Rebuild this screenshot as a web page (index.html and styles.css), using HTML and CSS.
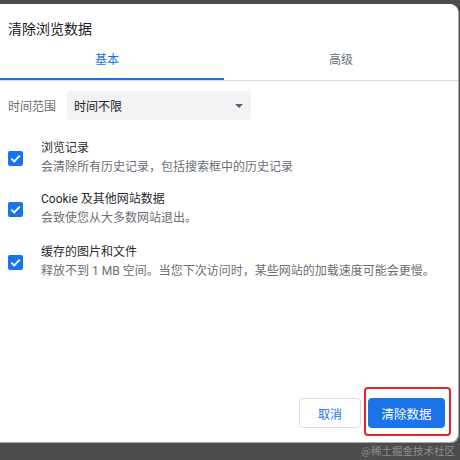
FILE: index.html
```html
<!DOCTYPE html>
<html lang="zh-CN">
<head>
<meta charset="utf-8">
<title>清除浏览数据</title>
<link rel="stylesheet" href="styles.css">
</head>
<body>
<div class="dialog">
  <div class="title">清除浏览数据</div>
  <div class="tabs">
    <div class="tab active">基本</div>
    <div class="tab">高级</div>
  </div>
  <div class="range-row">
    <span class="range-label">时间范围</span>
    <div class="select">
      <span>时间不限</span>
      <span class="caret"></span>
    </div>
  </div>
  <div class="items">
    <div class="item">
      <span class="checkbox"><svg viewBox="0 0 15 15" width="15" height="15"><polyline points="3.3,7.6 6.2,10.4 11.8,4.6" fill="none" stroke="#fff" stroke-width="1.8"/></svg></span>
      <div class="item-text">
        <div class="item-title">浏览记录</div>
        <div class="item-sub">会清除所有历史记录，包括搜索框中的历史记录</div>
      </div>
    </div>
    <div class="item">
      <span class="checkbox"><svg viewBox="0 0 15 15" width="15" height="15"><polyline points="3.3,7.6 6.2,10.4 11.8,4.6" fill="none" stroke="#fff" stroke-width="1.8"/></svg></span>
      <div class="item-text">
        <div class="item-title">Cookie 及其他网站数据</div>
        <div class="item-sub">会致使您从大多数网站退出。</div>
      </div>
    </div>
    <div class="item item-last">
      <span class="checkbox"><svg viewBox="0 0 15 15" width="15" height="15"><polyline points="3.3,7.6 6.2,10.4 11.8,4.6" fill="none" stroke="#fff" stroke-width="1.8"/></svg></span>
      <div class="item-text">
        <div class="item-title">缓存的图片和文件</div>
        <div class="item-sub">释放不到 1 MB 空间。当您下次访问时，某些网站的加载速度可能会更慢。</div>
      </div>
    </div>
  </div>
  <div class="footer">
    <button class="btn btn-cancel">取消</button>
    <span class="clear-wrap">
      <button class="btn btn-primary">清除数据</button>
      <span class="highlight"></span>
    </span>
  </div>
</div>
<div class="watermark">@稀土掘金技术社区</div>
</body>
</html>
```

FILE: styles.css
```css
html, body {
  margin: 0;
  padding: 0;
  height: 100%;
}
body {
  background: #4d4d4d;
  font-family: Roboto, "Noto Sans CJK SC", sans-serif;
  overflow: hidden;
  position: relative;
}
.dialog {
  margin-top: 4px;
  margin-left: -10px;
  width: 468px;
  height: 438px;
  background: #fff;
  border-radius: 8px;
  box-shadow: 1px 1px 0 #a8a8a8;
  display: flex;
  flex-direction: column;
}
.title {
  padding: 16px 18px 0;
  font-size: 14px;
  line-height: 18px;
  color: #202124;
}
.tabs {
  margin-top: 4px;
  display: flex;
  border-bottom: 1px solid #dadce0;
}
.tab {
  flex: 1;
  height: 36px;
  line-height: 36px;
  text-align: center;
  font-size: 12px;
  color: #6b6f73;
  border-bottom: 2px solid transparent;
}
.tab.active {
  color: #1a73e8;
  border-bottom-color: #1a73e8;
}
.range-row {
  margin-top: 10px;
  padding: 0 18px;
  display: flex;
  align-items: center;
  gap: 11px;
}
.range-label {
  font-size: 12px;
  color: #6b6f73;
}
.select {
  width: 184px;
  height: 29px;
  box-sizing: border-box;
  padding: 0 8px 0 7px;
  background: #f1f3f4;
  border-radius: 4px;
  display: flex;
  align-items: center;
  justify-content: space-between;
  font-size: 12px;
  color: #202124;
}
.caret {
  width: 0;
  height: 0;
  border-left: 4px solid transparent;
  border-right: 4px solid transparent;
  border-top: 4px solid #5f6368;
}
.items {
  margin-top: 19px;
  padding: 0 18px;
  display: flex;
  flex-direction: column;
  gap: 13px;
}
.item {
  display: flex;
  align-items: center;
  gap: 18px;
}
.item-last {
  margin-top: 2px;
}
.checkbox {
  width: 15px;
  height: 15px;
  border-radius: 2px;
  background: #1a73e8;
  display: flex;
  flex: none;
}
.item-text {
  font-size: 12px;
  line-height: 19px;
}
.item-title {
  color: #2a2b2e;
}
.item-sub {
  color: #6b6f73;
}
.footer {
  margin-top: auto;
  padding: 0 13px 14px 0;
  display: flex;
  justify-content: flex-end;
  align-items: center;
  gap: 7px;
}
.btn {
  height: 30px;
  box-sizing: border-box;
  border-radius: 4px;
  font-family: Roboto, "Noto Sans CJK SC", sans-serif;
  font-size: 12px;
  padding: 0;
  cursor: pointer;
}
.btn-cancel {
  width: 62px;
  background: #fff;
  color: #1a73e8;
  border: 1px solid #dadce0;
}
.clear-wrap {
  position: relative;
  display: flex;
}
.btn-primary {
  width: 77px;
  background: #1a73e8;
  color: #fff;
  border: none;
  font-size: 12.5px;
}
.highlight {
  position: absolute;
  top: -11px;
  left: -4px;
  right: -6px;
  bottom: -8px;
  border: 2px solid #e8232a;
  border-radius: 4px;
  pointer-events: none;
}
.watermark {
  position: absolute;
  right: 5px;
  bottom: 2px;
  font-size: 10.5px;
  line-height: 14px;
  color: #8e8e8e;
  font-family: "Noto Sans CJK SC", sans-serif;
}
```
